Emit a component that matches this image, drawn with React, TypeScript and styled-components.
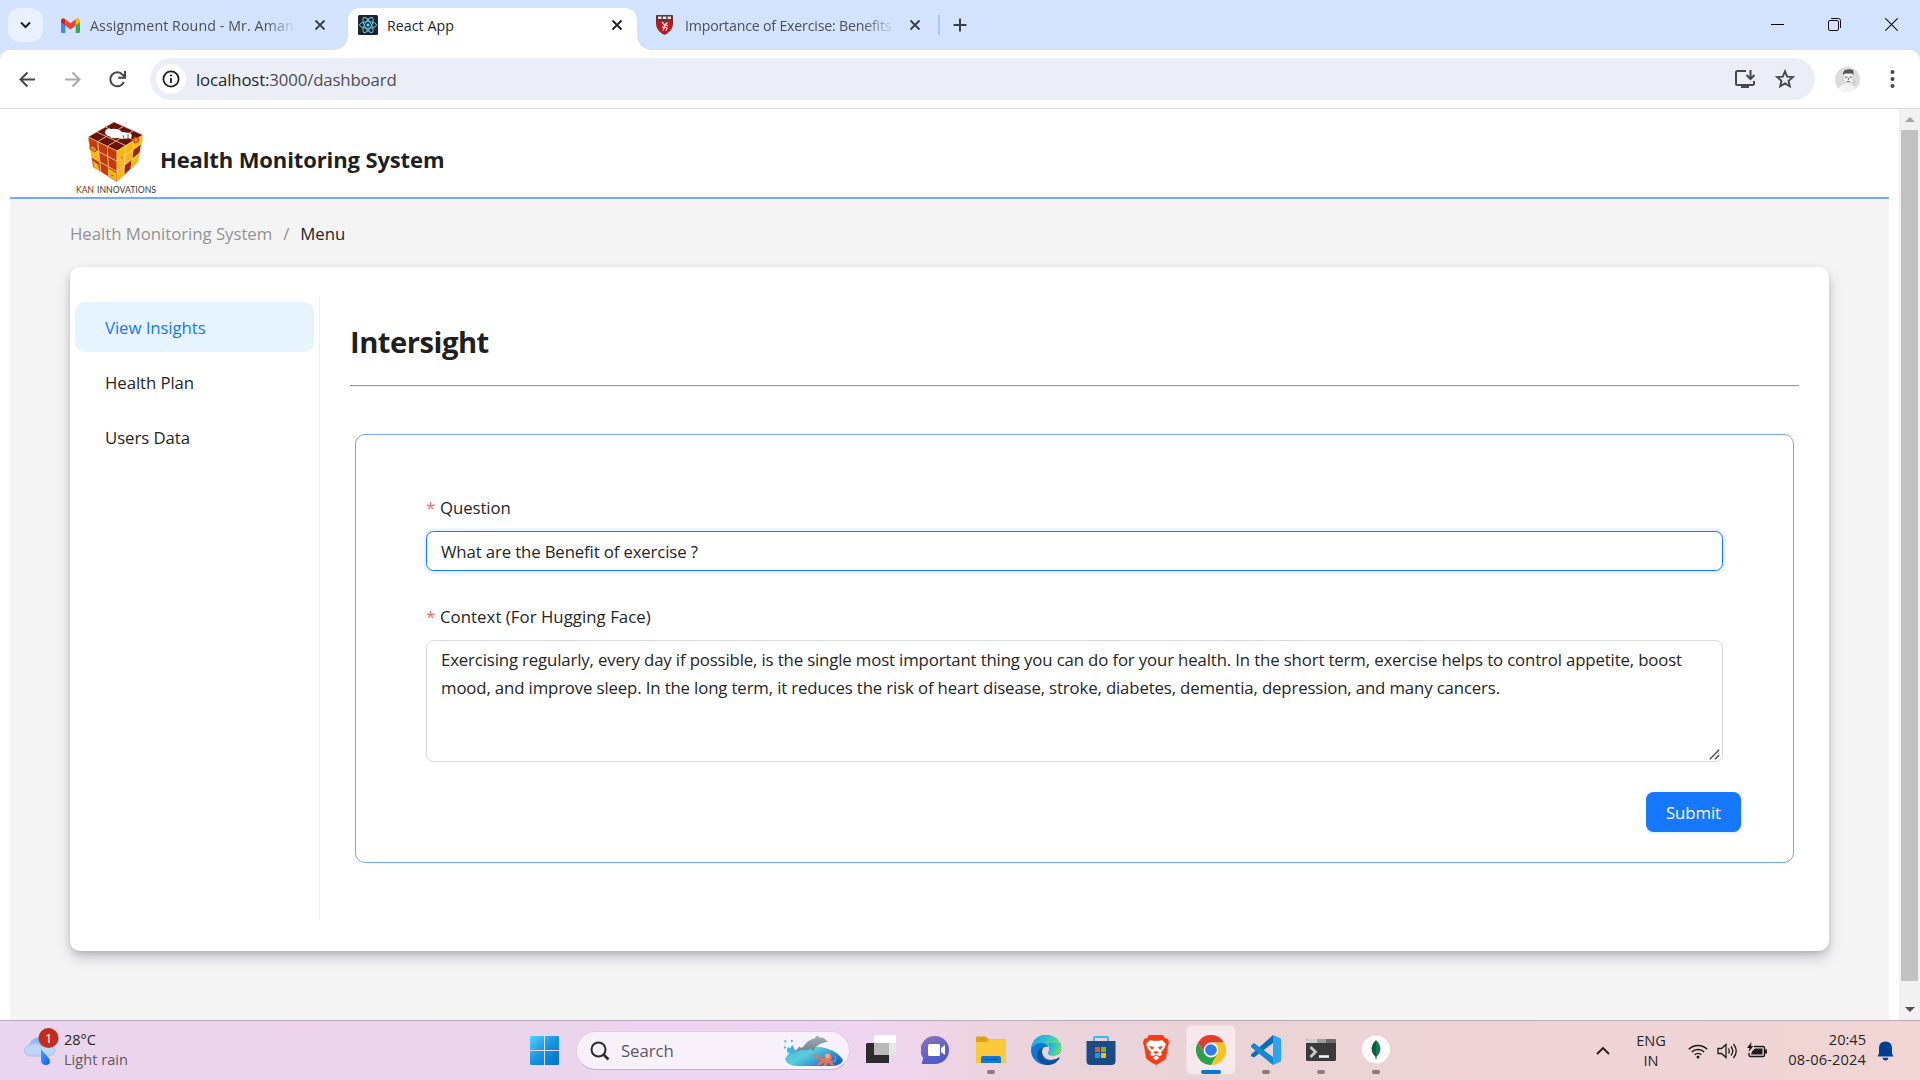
import React from "react";
import styled, { createGlobalStyle, css } from "styled-components";

const UI = `"Open Sans", "Noto Sans", sans-serif`;

const Global = createGlobalStyle`
  *, *::before, *::after { box-sizing: border-box; }
  body { margin: 0; background: #fff; overflow: hidden; font-family: ${UI}; color: #1f1f1f; }
  button, input, textarea { font-family: inherit; }
`;

const Screen = styled.div`
  width: 1920px;
  height: 1080px;
  display: flex;
  flex-direction: column;
  overflow: hidden;
`;

const Label = styled.span<{ $size?: number; $track?: number; $color?: string }>`
  font-size: ${(p) => p.$size ?? 16.8}px;
  letter-spacing: ${(p) => p.$track ?? -0.08}px;
  color: ${(p) => p.$color ?? "#262626"};
  white-space: nowrap;
`;

const Gap = styled.i<{ $w: number }>`
  flex: none;
  width: ${(p) => p.$w}px;
`;

/* ---------- browser chrome ---------- */

const TabStrip = styled.div`
  height: 50px;
  flex: none;
  display: flex;
  background: #d3e3fd;
  padding-left: 8px;
`;

const TabSearch = styled.button`
  width: 35px;
  height: 34px;
  margin-top: 8px;
  border: 0;
  padding: 0;
  border-radius: 12px;
  background: #e9f0fe;
  display: grid;
  place-items: center;
`;

const Tab = styled.div<{ $width: number; $active?: boolean; $left: number; $right: number }>`
  position: relative;
  width: ${(p) => p.$width}px;
  height: 42px;
  margin-top: 8px;
  padding: 0 ${(p) => p.$right}px 8px ${(p) => p.$left}px;
  display: flex;
  align-items: center;
  ${(p) =>
    p.$active &&
    css`
      background: #fff;
      border-radius: 12px 12px 0 0;
      &::before,
      &::after {
        content: "";
        position: absolute;
        bottom: 0;
        width: 14px;
        height: 14px;
      }
      &::before {
        left: -14px;
        background: radial-gradient(circle at 0 0, transparent 13.5px, #fff 14px);
      }
      &::after {
        right: -14px;
        background: radial-gradient(circle at 100% 0, transparent 13.5px, #fff 14px);
      }
    `}
`;

const TabTitle = styled.span<{ $fade?: boolean; $gap: number; $track: number; $color?: string }>`
  flex: 1;
  min-width: 0;
  margin-left: ${(p) => p.$gap}px;
  padding-top: 1px;
  overflow: hidden;
  white-space: nowrap;
  font-size: 14.2px;
  line-height: 20px;
  letter-spacing: ${(p) => p.$track}px;
  color: ${(p) => p.$color ?? "#4b4f55"};
  ${(p) => p.$fade && css`mask-image: linear-gradient(90deg, #000 calc(100% - 32px), transparent);`}
`;

const TabDivider = styled.i`
  width: 2px;
  height: 20px;
  margin: 15px 13px 0 0;
  background: #a8c7fa;
`;

const PlusWrap = styled.div`
  height: 50px;
  display: flex;
  align-items: center;
`;

const WindowControls = styled.div`
  margin-left: auto;
  width: 150px;
  height: 49px;
  display: flex;
  align-items: center;
  justify-content: space-between;
  padding: 0 22px 0 1px;
`;

const ToolbarBack = styled.div`
  flex: none;
  background: #d3e3fd;
`;

const Toolbar = styled.div`
  height: 59px;
  background: #fff;
  border-bottom: 1px solid #dedede;
  border-radius: 10px 10px 0 0;
  display: flex;
  align-items: center;
  padding-left: 17px;
`;

const NavButtons = styled.div`
  display: flex;
  gap: 24px;
  width: 133px;
`;

const Omnibox = styled.div`
  width: 1665px;
  height: 42px;
  border-radius: 21px;
  background: #ebeef7;
  display: flex;
  align-items: center;
  padding: 0 20px 0 6px;
`;

const SiteInfo = styled.span`
  width: 30px;
  height: 30px;
  border-radius: 50%;
  background: #fff;
  display: grid;
  place-items: center;
  margin-right: 10px;
`;

const OmniActions = styled.span`
  margin-left: auto;
  display: flex;
  gap: 19px;
  align-items: center;
`;

const ProfileMenu = styled.div`
  display: flex;
  align-items: center;
  gap: 30px;
  margin-left: 20px;
`;

/* ---------- page ---------- */

const Viewport = styled.div`
  flex: 1;
  min-height: 0;
  display: flex;
`;

const Page = styled.div`
  flex: 1;
  padding: 0 10px;
  display: flex;
  flex-direction: column;
  background: #fff;
`;

const Header = styled.header`
  height: 90px;
  flex: none;
  border-bottom: 2px solid #73a9f8;
  display: flex;
  align-items: flex-start;
  padding: 9px 0 0 66px;
`;

const Brand = styled.h1`
  margin: 23px 0 0 2px;
  font-size: 22px;
  font-weight: 700;
  line-height: 36px;
  letter-spacing: -0.12px;
  white-space: nowrap;
`;

const Layout = styled.main`
  flex: 1;
  background: #f4f4f4;
  padding: 0 60px;
  overflow: hidden;
`;

const Breadcrumb = styled.nav`
  height: 68px;
  display: flex;
  align-items: center;
  gap: 11px;
`;

const Card = styled.section`
  height: 684px;
  background: #fff;
  border-radius: 10px;
  box-shadow: 0 7px 15px -1px rgba(50, 50, 93, 0.22), 0 3px 8px -3px rgba(0, 0, 0, 0.3);
  display: flex;
  padding: 30px 30px 31px 0;
`;

const Sider = styled.ul`
  list-style: none;
  margin: 0;
  width: 250px;
  padding: 5px 5px 0;
  border-right: 1px solid #f0f0f0;
  display: flex;
  flex-direction: column;
  gap: 5px;
`;

const MenuItem = styled.li<{ $selected?: boolean }>`
  height: 50px;
  padding-left: 30px;
  border-radius: 10px;
  display: flex;
  align-items: center;
  background: ${(p) => (p.$selected ? "#e6f4ff" : "transparent")};
`;

const Content = styled.div`
  flex: 1;
  padding-left: 30px;
`;

const PageTitle = styled.h2`
  margin: 0;
  height: 88px;
  padding: 25px 0 0;
  font-size: 29.2px;
  line-height: 40px;
  font-weight: 700;
  letter-spacing: -0.5px;
`;

const Rule = styled.hr`
  margin: 0;
  border: 0;
  height: 2px;
  border-top: 1px solid #9a9a9a;
  background: #ededed;
`;

const FormBox = styled.form`
  margin: 47px 5px 0;
  height: 429px;
  border: 1px solid #73a9f8;
  border-radius: 10px;
  padding: 56px 52px 0 70px;
  display: flex;
  flex-direction: column;
`;

const Field = styled.div<{ $top?: number }>`
  margin: ${(p) => p.$top ?? 0}px 18px 0 0;
`;

const FieldLabel = styled.label`
  height: 40px;
  display: flex;
  align-items: center;
  padding-bottom: 7px;
`;

const Star = styled.span`
  width: 14px;
  font-size: 17px;
  line-height: 20px;
  padding-top: 1px;
  color: #ff6b6d;
`;

const inputText = css`
  font-size: 16.8px;
  letter-spacing: -0.14px;
  color: #262626;
  border-radius: 7.5px;
  outline: none;
  display: block;
  width: 100%;
  background: #fff;
`;

const TextInput = styled.input`
  ${inputText}
  height: 40px;
  border: 1px solid #1677ff;
  padding: 0 14px;
  box-shadow: 0 0 0 2.5px rgba(5, 145, 255, 0.1);
`;

const AreaWrap = styled.div`
  position: relative;
`;

const TextArea = styled.textarea`
  ${inputText}
  height: 122px;
  border: 1px solid #d9d9d9;
  padding: 5px 14px;
  line-height: 27.5px;
  resize: none;
`;

const Grip = styled.svg`
  position: absolute;
  right: 3px;
  bottom: 2px;
`;

const Submit = styled.button`
  align-self: flex-end;
  margin-top: 30px;
  width: 95px;
  height: 40px;
  border: 0;
  padding: 0;
  border-radius: 7.5px;
  background: #1677ff;
  box-shadow: 0 2.5px 0 rgba(5, 145, 255, 0.1);
`;

const ScrollTrack = styled.div`
  width: 21px;
  background: #f1f1f1;
  display: flex;
  flex-direction: column;
  align-items: center;
`;

const ArrowCell = styled.span<{ $h: number; $top?: number }>`
  height: ${(p) => p.$h}px;
  padding-top: ${(p) => p.$top ?? 0}px;
  flex: none;
  display: grid;
  place-items: center;
`;

const Thumb = styled.span`
  width: 17px;
  height: 851px;
  flex: none;
  background: #c1c1c1;
`;

/* ---------- taskbar ---------- */

const Taskbar = styled.footer`
  height: 60px;
  flex: none;
  border-top: 1px solid #bbabb9;
  display: flex;
  align-items: center;
  background: linear-gradient(90deg, #e9d5ee 0, #ecd5ea 300px, #ead5ed 520px, #efd5f0 860px, #ecd3dd 1010px, #ead3d6 1200px, #efd4d7 1600px, #f0d5d3 1920px);
`;

const Weather = styled.div`
  width: 530px;
  display: flex;
  align-items: center;
`;

const WeatherIcon = styled.span`
  width: 64px;
  height: 60px;
  display: block;
`;

const Stack = styled.span<{ $align: string; $width?: number; $lift?: number }>`
  display: flex;
  flex-direction: column;
  align-items: ${(p) => p.$align};
  width: ${(p) => (p.$width ? p.$width + "px" : "auto")};
  line-height: 20px;
  padding-bottom: ${(p) => p.$lift ?? 2}px;
`;

const SearchPill = styled.div`
  width: 274px;
  height: 39px;
  margin: 0 3px 0 17px;
  border-radius: 20px;
  border: 1px solid #e2cce3;
  border-bottom-color: #c8b0ca;
  background: #f9f1fa;
  display: flex;
  align-items: center;
  padding: 0 5px 0 13px;
`;

const SearchArt = styled.span`
  margin-left: auto;
  height: 31px;
`;

const AppCell = styled.span`
  width: 55px;
  height: 59px;
  display: flex;
  justify-content: center;
  padding-top: 5px;
`;

const AppTile = styled.span<{ $active?: boolean }>`
  width: 48px;
  height: 48px;
  border-radius: 5px;
  background: ${(p) => (p.$active ? "#f7e9eb" : "transparent")};
  box-shadow: ${(p) => (p.$active ? "0 0 0 1px #ecdcdf" : "none")};
  display: flex;
  flex-direction: column;
  align-items: center;
  justify-content: space-between;
  padding-top: 9px;
`;

const Indicator = styled.i<{ $kind?: "open" | "active" }>`
  height: 4px;
  border-radius: 2px;
  width: ${(p) => (p.$kind === "active" ? 20 : 8)}px;
  background: ${(p) => (p.$kind === "active" ? "#0078d4" : p.$kind === "open" ? "#8b797e" : "transparent")};
`;

const Tray = styled.div`
  margin-left: auto;
  display: flex;
  align-items: center;
  padding-right: 26px;
`;

const TrayIcons = styled.span`
  display: flex;
  gap: 9px;
  width: 89px;
`;

/* ---------- drawings ---------- */

const Cross = ({ color = "#3c3f43" }: { color?: string }) => (
  <svg width="12" height="12" viewBox="0 0 12 12">
    <path d="M1.5 1.5l9 9M10.5 1.5l-9 9" stroke={color} strokeWidth="1.8" />
  </svg>
);

const Gmail = () => (
  <svg width="19" height="15" viewBox="0 0 19 15">
    <path d="M0 3v10.5Q0 15 1.5 15H4.3V6z" fill="#4285f4" />
    <path d="M19 3v10.5Q19 15 17.5 15H14.7V6z" fill="#34a853" />
    <path d="M14.7 1.3V7.5L19 4.3V2.5Q18.500 0 16 .4z" fill="#fbbc04" />
    <path d="M4.3 1.3V7.5L0 4.3V2.5Q.5 0 3 .4z" fill="#c5221f" />
    <path d="M4.3 1.3L9.5 5.2l5.2-3.900v6.200L9.500 11.400 4.300 7.500z" fill="#ea4335" />
  </svg>
);

const ReactIcon = () => (
  <svg width="20" height="20" viewBox="0 0 20 20">
    <rect width="20" height="20" rx="1.500" fill="#20232a" />
    <g stroke="#61dafb" fill="none" strokeWidth=".9">
      <ellipse cx="10" cy="10" rx="8.500" ry="3.300" />
      <ellipse cx="10" cy="10" rx="8.500" ry="3.300" transform="rotate(60 10 10)" />
      <ellipse cx="10" cy="10" rx="8.500" ry="3.300" transform="rotate(120 10 10)" />
    </g>
    <circle cx="10" cy="10" r="1.600" fill="#61dafb" />
  </svg>
);

const Shield = () => (
  <svg width="17" height="20" viewBox="0 0 17 20">
    <path d="M.5.5h16v7.500q0 8-8 11.500Q.5 16 .5 8z" fill="#c4161c" stroke="#7a2a2a" />
    <path d="M1 1h15v5H1z" fill="#5b3434" />
    <path d="M2 1.500h3.500V4H2zM6.800 1.500h3.500V4H6.800zM11.600 1.500H15V4h-3.400z" fill="#e8dede" />
    <path d="M6 7l1.500 1.500M11.500 7.500L9 9.500l-2 0M9 9.500L8.500 12l-2.500.5M8.500 12l2.500 1-1 2.500M8.500 12l-1.500 3.500M9 9.500l3 1.500" stroke="#f6dede" strokeWidth="1.300" fill="none" />
  </svg>
);

const Arrow = ({ flip, color }: { flip?: boolean; color: string }) => (
  <svg width="21" height="21" viewBox="0 0 21 21" transform={flip ? "scale(-1 1)" : undefined}>
    <path d="M18 10.500H4M10.500 3.500l-7 7 7 7" fill="none" stroke={color} strokeWidth="2" />
  </svg>
);

const Reload = () => (
  <svg width="21" height="21" viewBox="0 0 21 21">
    <path d="M16.800 13A7 7 0 1 1 15.700 5.800L17 7.200" fill="none" stroke="#474747" strokeWidth="2" />
    <path d="M18 2v6.800h-6.800" fill="none" stroke="#474747" strokeWidth="2" />
  </svg>
);

const InfoIcon = () => (
  <svg width="18" height="18" viewBox="0 0 18 18">
    <circle cx="9" cy="9" r="7.600" fill="none" stroke="#1f1f1f" strokeWidth="1.800" />
    <path d="M9 8v5" stroke="#1f1f1f" strokeWidth="1.800" />
    <circle cx="9" cy="5.500" r="1.100" fill="#1f1f1f" />
  </svg>
);

const InstallIcon = () => (
  <svg width="22" height="20" viewBox="0 0 22 20">
    <path d="M12 2H3.500Q2 2 2 3.500v11Q2 16 3.500 16h15q1.500 0 1.500-1.500V12" fill="none" stroke="#474747" strokeWidth="2" />
    <path d="M7 16h8v3H7z" fill="#474747" />
    <path d="M16.500 1v8.500M12.500 6l4 4 4-4" fill="none" stroke="#474747" strokeWidth="2" />
  </svg>
);

const StarIcon = () => (
  <svg width="20" height="20" viewBox="0 0 20 20">
    <path d="M10 2.400l2.200 5.200 5.600.5-4.200 3.700 1.200 5.500L10 14.400l-4.800 2.900 1.200-5.500-4.200-3.700 5.600-.5z" fill="none" stroke="#474747" strokeWidth="1.900" />
  </svg>
);

const Avatar = () => (
  <svg width="25" height="25" viewBox="0 0 25 25">
    <circle cx="12.500" cy="12.500" r="12.500" fill="#dcdcdc" />
    <path d="M4 21q3-5 9-4.500T21 22a12.500 12.500 0 0 1-17 0z" fill="#f3f3f3" />
    <path d="M9 6h8.500v6q-.5 4-4.200 5Q9.500 16 9 12z" fill="#efefef" />
    <path d="M8 8q-.5-5 4-5.500 6-1 6.500 2V8l-1.500-1.500H10z" fill="#555" />
    <path d="M10 10.200h2.500M14.500 10.200H17M11.500 14.700h3.500M13.400 11v2" stroke="#666" strokeWidth="1" />
    <path d="M19 12v7" stroke="#bbb" />
  </svg>
);

type Pt = [number, number];

/* One side of the cube: a quad split into 3 by 3 tiles, colours row by row. */
const CubeFace = ({ corners, tiles }: { corners: [Pt, Pt, Pt, Pt]; tiles: string[] }) => {
  const [a, b, c, d] = corners;
  const at = (u: number, v: number) =>
    [0, 1]
      .map((k) => (a[k] * (1 - u) * (1 - v) + b[k] * u * (1 - v) + c[k] * u * v + d[k] * (1 - u) * v).toFixed(2))
      .join(",");
  return (
    <g stroke="#f0d2a8" strokeWidth=".6">
      {tiles.map((fill, i) => {
        const u = (i % 3) / 3;
        const v = Math.floor(i / 3) / 3;
        const s = 1 / 3;
        return <polygon key={i} fill={fill} points={[at(u, v), at(u + s, v), at(u + s, v + s), at(u, v + s)].join(" ")} />;
      })}
    </g>
  );
};

const D = "#6a120a";
const R = "#c63c08";
const Y = "#f9b80c";
const M = "#9c2408";

const LogoSvg = styled.svg`
  flex: none;
  overflow: visible;
`;

const KanLogo = () => (
  <LogoSvg width="82" height="79" viewBox="0 0 82 79">
    <CubeFace corners={[[38, 4], [67, 17], [41, 33], [12, 19]]} tiles={[D, D, D, D, D, D, D, D, D]} />
    <CubeFace corners={[[12, 19], [41, 33], [41, 64], [17, 49]]} tiles={[R, R, R, Y, R, R, R, R, R]} />
    <CubeFace corners={[[41, 33], [67, 17], [62, 44], [41, 64]]} tiles={[Y, Y, Y, Y, Y, M, Y, M, Y]} />
    <path d="M17 43l5 3.500 1.500 6.500-5.500-4zM32 50l8 5v8l-7-5z" fill={Y} />
    <path d="M14 28l4 0 3 4-2 2-5-3zM58 19l5 1-1 4-4 1zM36 34l2 2M50 49l3-1M45 40l2-1M35 57l3 1" fill="#e58a0a" stroke="#a5330a" strokeWidth=".8" />
    <path d="M29 14q1-4 6-3 7-1 11 3l8 1q3 2 1 5l-8 1q-4-1-6-1-6 1-8-2-4-1-4-4z" fill="#fff" />
    <path d="M47 17l1 4M52 16v5" stroke="#8a4036" strokeWidth=".9" />
    <text x="0" y="75" fontFamily="Lato, sans-serif" fontSize="9.800" textLength="18" lengthAdjust="spacingAndGlyphs" fill="#8c2b1d">KAN</text>
    <text x="21" y="75" fontFamily="Lato, sans-serif" fontSize="9.800" textLength="59" lengthAdjust="spacingAndGlyphs" fill="#3d3937">INNOVATIONS</text>
  </LogoSvg>
);

const CloudIcon = () => (
  <svg width="64" height="58" viewBox="0 0 64 58">
    <defs>
      <linearGradient id="cl" x1="0" y1="0" x2="0" y2="1">
        <stop offset="0" stopColor="#86aef0" />
        <stop offset="1" stopColor="#cfe1fa" />
      </linearGradient>
      <linearGradient id="drop" x1="0" y1="0" x2="1" y2="1">
        <stop offset="0" stopColor="#4aa0fb" />
        <stop offset="1" stopColor="#0a62ee" />
      </linearGradient>
    </defs>
    <path d="M31 35a9 9 0 1 1 17-15l7 8q2 8-6 7z" fill="url(#cl)" />
    <path d="M31 35a6 5.500 0 0 1-1-11q6-4 12 1l7-1q7 2 6 6t-6 5z" fill="#bcd5f8" stroke="#94b7ef" strokeWidth=".7" />
    <path d="M41 28l8 9.500q3 6-3 6.500-5 0-5-5z" fill="url(#drop)" />
    <circle cx="48.500" cy="17" r="10" fill="#c42b1c" />
    <text x="48.700" y="22" fontSize="13.500" textAnchor="middle" fill="#fff" fontFamily="Open Sans, sans-serif">1</text>
  </svg>
);

const StartIcon = () => (
  <svg width="29" height="29" viewBox="0 0 29 29">
    <defs>
      <linearGradient id="win" x1="0" y1="0" x2="1" y2="1">
        <stop offset="0" stopColor="#4fd2ff" />
        <stop offset=".5" stopColor="#1594e0" />
        <stop offset="1" stopColor="#0070cf" />
      </linearGradient>
    </defs>
    <path d="M1 0h13v14H0V1q0-1 1-1zM15 0h13q1 0 1 1v13H15zM0 15h14v14H1q-1 0-1-1zM15 15h14v13q0 1-1 1H15z" fill="url(#win)" />
  </svg>
);

const Magnifier = () => (
  <svg width="20" height="20" viewBox="0 0 20 20">
    <circle cx="8.500" cy="8.500" r="7" fill="none" stroke="#2b2b2b" strokeWidth="2" />
    <path d="M13.500 13.500l5 5" stroke="#2b2b2b" strokeWidth="2.600" />
  </svg>
);

const DolphinArt = () => (
  <svg width="61" height="31" viewBox="0 0 61 31">
    <defs>
      <linearGradient id="sea" x1="0" y1="0" x2="1" y2=".6">
        <stop offset="0" stopColor="#3fb4dc" />
        <stop offset=".45" stopColor="#5bcdd8" />
        <stop offset="1" stopColor="#0d6fd8" />
      </linearGradient>
      <linearGradient id="skin" x1="0" y1="0" x2="0" y2="1">
        <stop offset="0" stopColor="#a3b2b9" />
        <stop offset="1" stopColor="#6f828c" />
      </linearGradient>
    </defs>
    <path d="M2 24Q8 12 30 11.500 52 12 60 25q-2 6-12 6H14Q4 31 2 24z" fill="url(#sea)" />
    <path d="M5 18q-2-3 0-6l2.500 1.500q0-3 2.500-3l2 5-1 3z" fill="#3db4e6" />
    <path d="M1 5l3 1-2 2zM8 4.500l3 1.500-3 1.500zM.5 11l3 1-2 2z" fill="#4dbbe8" />
    <path d="M11 16q4 0 5-5 1 3 4 1Q25 4.500 32 3l2-2.500 3 2q5 0 6 3l2.500 1-3.500.8q-5 1-10 5l-1.500 4-2.500-2.500q-5 2.500-9 1-4 2-8 1.200z" fill="url(#skin)" />
    <path d="M42 20q4-4 6 0 2 4-1 6l7 0-5 1.500 3 3h-4l-3-3-2 3.500h-3l2-4.500-5 3.500h-4q4-3 5-5.500l-4-1q-3-2-4-4 4-1 6 2.500l4 1.500q4-1 2-6.500z" fill="#f0714f" />
    <circle cx="44.500" cy="21" r="2.500" fill="#f9a37e" />
    <path d="M50 27q4-2 2-6" fill="none" stroke="#f0714f" strokeWidth="1.300" />
  </svg>
);

const TaskView = () => (
  <svg width="30" height="30" viewBox="0 0 30 30">
    <path d="M1 8h22v20H0V9z" fill="#2b2b2a" />
    <rect x="8" y="0" width="22" height="20" rx="1" fill="#fff" />
    <path d="M8 8h15v12H8z" fill="#b9b9b8" />
    <path d="M23 8h7v11q0 1-1 1h-6z" fill="#e9e6e9" />
  </svg>
);

const ChatIcon = () => (
  <svg width="30" height="30" viewBox="0 0 30 30">
    <defs>
      <linearGradient id="chat" x1="0" y1="0" x2=".4" y2="1">
        <stop offset="0" stopColor="#8a72b8" />
        <stop offset="1" stopColor="#5059cc" />
      </linearGradient>
    </defs>
    <path d="M15 1a14 14 0 1 1-2 28H1.500q-1 0-.6-1l1.300-5A14 14 0 0 1 15 1z" fill="url(#chat)" />
    <rect x="7" y="9" width="12" height="12" rx="1.500" fill="#fff" />
    <path d="M20 13l4-3v10l-4-3z" fill="#fff" />
  </svg>
);

const FolderIcon = () => (
  <svg width="30" height="30" viewBox="0 0 30 30">
    <path d="M0 3q0-1.500 1.500-1.500h8L13 4.500h17V12H0z" fill="#e0a010" />
    <path d="M0 7h10l3-2h16q1 0 1 1v21q0 1-1 1H0z" fill="#fcc93a" />
    <path d="M5 28v-5q0-2 2-2h16q2 0 2 2v5z" fill="#1277d3" />
    <path d="M9 24.500h12" stroke="#064f9b" />
  </svg>
);

const EdgeIcon = () => (
  <svg width="30" height="30" viewBox="0 0 30 30">
    <defs>
      <linearGradient id="eg" x1="0" y1="0" x2="1" y2=".5">
        <stop offset="0" stopColor="#1b9de2" />
        <stop offset=".5" stopColor="#35c1cf" />
        <stop offset="1" stopColor="#6be45b" />
      </linearGradient>
    </defs>
    <circle cx="15" cy="15" r="15" fill="#1277d2" />
    <path d="M0 14Q2 0 15.500 0 29 1 30 12q0 8-8 8.500-5 0-5-2.500 2-2 1-5Q16 8 10 8 3 8 0 14z" fill="url(#eg)" />
    <path d="M11 16q-1 8 7 10 5 1 10-2-5 7-13 6-9-3-9-10 0-6 6-7-1 1-1 3z" fill="#12509c" />
    <path d="M18 12q-7-1-7 5 1 7 9 8 5 0 9-3 1-3 1-6-3 5-8 4.500-5 0-5-2.500 2-2 1-6z" fill="#ecd4da" />
    <path d="M20 25q5 0 8.500-3 .5 1-1 3-5 3-10 1z" fill="#12509c" />
    <path d="M17 18q0 2.500 5 2.500 7-.5 8-8.500V8H18q1 6-1 10z" fill="url(#eg)" />
  </svg>
);

const StoreIcon = () => (
  <svg width="30" height="30" viewBox="0 0 30 30">
    <path d="M8 7V3q0-1 1-1h12q1 0 1 1v4" fill="none" stroke="#31bdf0" strokeWidth="2" />
    <path d="M.5 6h29v20q0 4-4 4h-21q-4 0-4-4z" fill="#1b4a84" />
    <path d="M9 12h5v5H9z" fill="#f25022" />
    <path d="M15 12h5v5h-5z" fill="#7fba00" />
    <path d="M9 18h5v5H9z" fill="#00a4ef" />
    <path d="M15 18h5v5h-5z" fill="#ffb900" />
  </svg>
);

const BraveIcon = () => (
  <svg width="30" height="30" viewBox="0 0 30 30">
    <path d="M8 0h14l2 3 3 1 1 4-1 3-2 12q-1 2-10 7-9-5-10-7L3 11 2 8l1-4 3-1z" fill="#fb3b14" />
    <path d="M9 5l3 .8h6L21 5l4 4-2 5-3 3 1 3-3 1-3-1.500L12 21l-3-1 1-3-3-3-2-5z" fill="#fff" />
    <path d="M8 11l5 1-2 3zM22 11l-5 1 2 3zM12 17l3-1 3 1-3 2z" fill="#fb3b14" />
    <path d="M11.500 22.500l3.500-2 3.500 2-3.500 3z" fill="#fff" />
  </svg>
);

const ChromeIcon = () => (
  <svg width="30" height="30" viewBox="0 0 30 30">
    <path d="M2 7.500A15 15 0 0 1 28 7.500H15L8.500 18.800z" fill="#e33b2e" />
    <path d="M28 7.500A15 15 0 0 1 15 30l6.500-11.300L15 7.500z" fill="#fcc31e" />
    <path d="M15 30A15 15 0 0 1 2 7.500l6.500 11.300 8 2.500 5-2.500z" fill="#2ba14b" />
    <circle cx="15" cy="15" r="7.400" fill="#fff" />
    <circle cx="15" cy="15" r="5.800" fill="#2f7bf0" />
  </svg>
);

const CodeIcon = () => (
  <svg width="30" height="30" viewBox="0 0 30 30">
    <path d="M0 19.500L22 0v8L3 22.500 0 21z" fill="#0a6fba" />
    <path d="M0 10.500L3 8l19 14v8L0 12z" fill="#1488d0" />
    <path d="M22 0l7 3q1 .5 1 1.500v21q0 1-1 1.500l-7 3z" fill="#2ea3ef" />
  </svg>
);

const TerminalIcon = () => (
  <svg width="30" height="30" viewBox="0 0 30 30">
    <rect y="4" width="30" height="22" rx="1.500" fill="#3a3a3a" />
    <path d="M0 8V5.500Q0 4 1.500 4H11v4z" fill="#cfcfcf" />
    <path d="M11 4h9v4h-9z" fill="#9d9d9d" />
    <path d="M20 4h8.500Q30 4 30 5.500V8H20z" fill="#6b6b6b" />
    <path d="M4.500 12l5 5-5 5" fill="none" stroke="#c9c9c9" strokeWidth="2.800" />
    <path d="M13 21.500h10" stroke="#f2f2f2" strokeWidth="2.600" />
  </svg>
);

const MongoIcon = () => (
  <svg width="30" height="30" viewBox="0 0 30 30">
    <circle cx="15" cy="14.500" r="14" fill="#fbfbfa" />
    <path d="M15 5q5 5 4.300 10-.5 4-4.300 7z" fill="#0f7a50" />
    <path d="M15 5q-5 5-4.300 10 .5 4 4.300 7z" fill="#13573d" />
    <path d="M15 20v4" stroke="#13573d" />
  </svg>
);

const WifiIcon = () => (
  <svg width="20" height="18" viewBox="0 0 20 18" fill="none" stroke="#1c1a1a" strokeWidth="1.500">
    <path d="M.8 7.200a13 13 0 0 1 18.400 0M3.800 10a9 9 0 0 1 12.400 0M6.700 12.800a4.800 4.800 0 0 1 6.600 0" />
    <circle cx="10" cy="15" r="1.500" fill="#1c1a1a" stroke="none" />
  </svg>
);

const SpeakerIcon = () => (
  <svg width="21" height="18" viewBox="0 0 21 18" fill="none" stroke="#1c1a1a" strokeWidth="1.300">
    <path d="M1 6.500h3.500L9 2.500v13l-4.500-4H1zM11.500 6.500q1.500 2.500 0 5M14 4.500q3.500 4.500 0 9M16.500 2q5.500 7 0 14" />
  </svg>
);

const BatteryIcon = () => (
  <svg width="21" height="18" viewBox="0 0 21 18">
    <path d="M7 4.500h9q1.500 0 1.500 1.500v7q0 1.500-1.500 1.500H3.500Q2 14.500 2 13v-2" fill="none" stroke="#1c1a1a" strokeWidth="1.400" />
    <path d="M18 7.500h2v4h-2z" fill="#1c1a1a" />
    <path d="M8 6.500h7.500v6H4L5 9.500z" fill="#1c1a1a" />
    <path d="M4.500 0L0 6h2.500L1.500 10 6.500 4H4z" fill="#1c1a1a" />
  </svg>
);

const BellIcon = () => (
  <svg width="17" height="20" viewBox="0 0 17 20">
    <path d="M.5 15.500L2 12.500V7q0-6.500 6.500-6.500T15 7v5.500l1.500 3zM5.500 16.800h6q-.5 2.700-3 2.700t-3-2.700z" fill="#003e92" />
  </svg>
);

const Triangle = ({ down }: { down?: boolean }) => (
  <svg width="10" height="5" viewBox="0 0 10 5">
    <path d={down ? "M0 0h10L5 5z" : "M0 5h10L5 0z"} fill={down ? "#505050" : "#a3a3a3"} />
  </svg>
);

type TaskApp = { icon: React.ReactNode; state?: "open" | "active" };

const apps: TaskApp[] = [
  { icon: <TaskView /> },
  { icon: <ChatIcon /> },
  { icon: <FolderIcon />, state: "open" },
  { icon: <EdgeIcon /> },
  { icon: <StoreIcon /> },
  { icon: <BraveIcon /> },
  { icon: <ChromeIcon />, state: "active" },
  { icon: <CodeIcon />, state: "open" },
  { icon: <TerminalIcon />, state: "open" },
  { icon: <MongoIcon />, state: "open" },
];

const menu = ["View Insights", "Health Plan", "Users Data"];

const context =
  "Exercising regularly, every day if possible, is the single most important thing you can do for your health. In the short term, exercise helps to control appetite, boost mood, and improve sleep. In the long term, it reduces the risk of heart disease, stroke, diabetes, dementia, depression, and many cancers.";

export default function App() {
  return (
    <Screen>
      <Global />
      <TabStrip>
        <TabSearch>
          <svg width="11" height="8" viewBox="0 0 11 8">
            <path d="M1 1.500l4.500 4.500L10 1.500" fill="none" stroke="#1f1f1f" strokeWidth="2" />
          </svg>
        </TabSearch>
        <Tab $width={305} $left={18} $right={22}>
          <Gmail />
          <TabTitle $gap={10} $track={0.1} $fade>
            Assignment Round - Mr. Aman
          </TabTitle>
          <Gap $w={17} />
          <Cross />
        </Tab>
        <Tab $width={289} $left={10} $right={14} $active>
          <ReactIcon />
          <TabTitle $gap={9} $track={0.05} $color="#262626">
            React App
          </TabTitle>
          <Cross color="#1f1f1f" />
        </Tab>
        <Tab $width={301} $left={19} $right={17}>
          <Shield />
          <TabTitle $gap={12} $track={-0.2} $fade>
            Importance of Exercise: Benefits
          </TabTitle>
          <Gap $w={14} />
          <Cross />
        </Tab>
        <TabDivider />
        <PlusWrap>
          <svg width="14" height="14" viewBox="0 0 14 14">
            <path d="M7 .5v13M.5 7h13" stroke="#3c3f43" strokeWidth="2" />
          </svg>
        </PlusWrap>
        <WindowControls>
          <svg width="13" height="13" viewBox="0 0 13 13">
            <path d="M0 6.500h13" stroke="#000" />
          </svg>
          <svg width="13" height="13" viewBox="0 0 13 13">
            <path d="M3 .5h7.500q2 0 2 2V10" fill="none" stroke="#111" />
            <rect x=".5" y="2.500" width="10" height="10" rx="1.500" fill="none" stroke="#111" />
          </svg>
          <svg width="13" height="13" viewBox="0 0 13 13">
            <path d="M.3.3l12.400 12.400M12.700.3L.3 12.700" stroke="#111" strokeWidth="1.100" />
          </svg>
        </WindowControls>
      </TabStrip>

      <ToolbarBack>
        <Toolbar>
          <NavButtons>
            <Arrow color="#474747" />
            <Arrow color="#a9a9a9" flip />
            <Reload />
          </NavButtons>
          <Omnibox>
            <SiteInfo>
              <InfoIcon />
            </SiteInfo>
            <Label $track={-0.14}>localhost:</Label>
            <Label $track={-0.14} $color="#4d4d4d">
              3000/dashboard
            </Label>
            <OmniActions>
              <InstallIcon />
              <StarIcon />
            </OmniActions>
          </Omnibox>
          <ProfileMenu>
            <Avatar />
            <svg width="6" height="20" viewBox="0 0 6 20" fill="#474747">
              <circle cx="2.500" cy="3" r="2" />
              <circle cx="2.500" cy="10" r="2" />
              <circle cx="2.500" cy="17" r="2" />
            </svg>
          </ProfileMenu>
        </Toolbar>
      </ToolbarBack>

      <Viewport>
        <Page>
          <Header>
            <KanLogo />
            <Brand>Health Monitoring System</Brand>
          </Header>
          <Layout>
            <Breadcrumb>
              <Label $track={-0.04} $color="#929292">
                Health Monitoring System
              </Label>
              <Label $color="#929292">/</Label>
              <Label>Menu</Label>
            </Breadcrumb>
            <Card>
              <Sider>
                {menu.map((m, i) => (
                  <MenuItem key={m} $selected={i === 0}>
                    <Label $color={i === 0 ? "#1677ff" : undefined}>{m}</Label>
                  </MenuItem>
                ))}
              </Sider>
              <Content>
                <PageTitle>Intersight</PageTitle>
                <Rule />
                <FormBox>
                  <Field>
                    <FieldLabel>
                      <Star>*</Star>
                      <Label>Question</Label>
                    </FieldLabel>
                    <TextInput readOnly value="What are the Benefit of exercise ?" />
                  </Field>
                  <Field $top={29}>
                    <FieldLabel>
                      <Star>*</Star>
                      <Label $track={0.04}>Context (For Hugging Face)</Label>
                    </FieldLabel>
                    <AreaWrap>
                      <TextArea readOnly value={context} />
                      <Grip width="11" height="11" viewBox="0 0 11 11">
                        <path d="M.8 10.200L10.200.8M6 10.200L10.200 6" stroke="#4a4a4a" strokeWidth="1.400" />
                      </Grip>
                    </AreaWrap>
                  </Field>
                  <Submit type="button">
                    <Label $color="#fff">Submit</Label>
                  </Submit>
                </FormBox>
              </Content>
            </Card>
          </Layout>
        </Page>
        <ScrollTrack>
          <ArrowCell $h={21}>
            <Triangle />
          </ArrowCell>
          <Thumb />
          <ArrowCell $h={39} $top={18}>
            <Triangle down />
          </ArrowCell>
        </ScrollTrack>
      </Viewport>

      <Taskbar>
        <Weather>
          <WeatherIcon>
            <CloudIcon />
          </WeatherIcon>
          <Stack $align="flex-start" $lift={4}>
            <Label $size={14.6}>28°C</Label>
            <Label $size={14.6} $track={0} $color="#5f5560">
              Light rain
            </Label>
          </Stack>
        </Weather>
        <StartIcon />
        <SearchPill>
          <Magnifier />
          <Gap $w={11} />
          <Label $color="#5c5660">Search</Label>
          <SearchArt>
            <DolphinArt />
          </SearchArt>
        </SearchPill>
        {apps.map((a, i) => (
          <AppCell key={i}>
            <AppTile $active={a.state === "active"}>
              {a.icon}
              <Indicator $kind={a.state} />
            </AppTile>
          </AppCell>
        ))}
        <Tray>
          <svg width="14" height="9" viewBox="0 0 14 9">
            <path d="M1 8l6-6 6 6" fill="none" stroke="#1c1a1a" strokeWidth="1.800" />
          </svg>
          <Gap $w={4} />
          <Stack $align="center" $width={74}>
            <Label $size={14.6}>ENG</Label>
            <Label $size={14.6}>IN</Label>
          </Stack>
          <TrayIcons>
            <WifiIcon />
            <SpeakerIcon />
            <BatteryIcon />
          </TrayIcons>
          <Stack $align="flex-end" $width={89} $lift={4}>
            <Label $size={14.6} $track={0}>20:45</Label>
            <Label $size={14.6} $track={0.15}>08-06-2024</Label>
          </Stack>
          <Gap $w={11} />
          <BellIcon />
        </Tray>
      </Taskbar>
    </Screen>
  );
}
